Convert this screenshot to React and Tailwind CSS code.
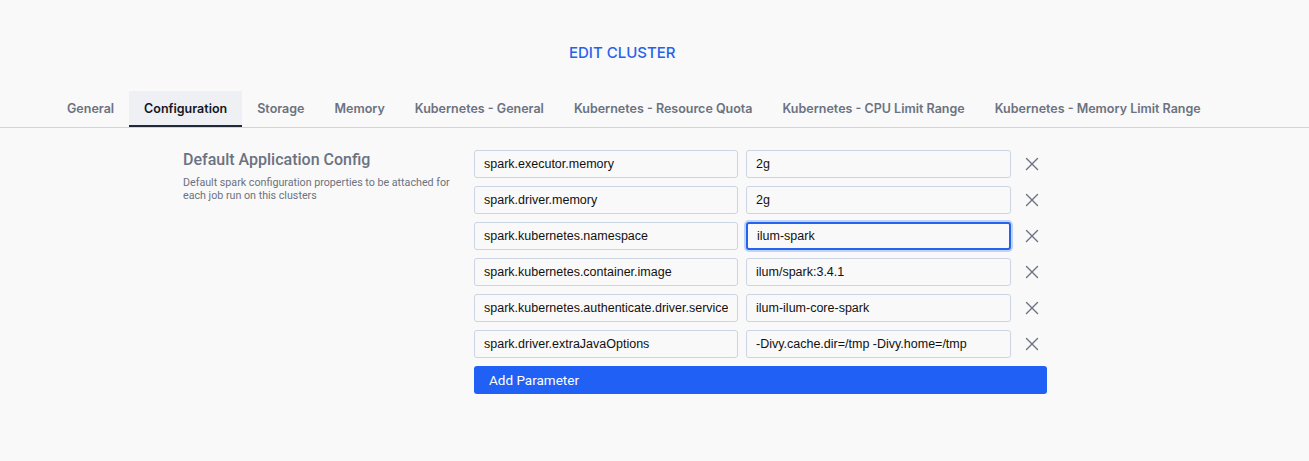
import React from "react";

const tabs = [
  "General",
  "Configuration",
  "Storage",
  "Memory",
  "Kubernetes - General",
  "Kubernetes - Resource Quota",
  "Kubernetes - CPU Limit Range",
  "Kubernetes - Memory Limit Range",
];

const params = [
  ["spark.executor.memory", "2g"],
  ["spark.driver.memory", "2g"],
  ["spark.kubernetes.namespace", "ilum-spark"],
  ["spark.kubernetes.container.image", "ilum/spark:3.4.1"],
  ["spark.kubernetes.authenticate.driver.serviceAccountName", "ilum-ilum-core-spark"],
  ["spark.driver.extraJavaOptions", "-Divy.cache.dir=/tmp -Divy.home=/tmp"],
];

function CloseIcon() {
  return (
    <svg width="16" height="16" viewBox="0 0 16 16" fill="none" stroke="#6b7280" strokeWidth="1.4" strokeLinecap="round">
      <path d="M2.5 2.5 L13.5 13.5 M13.5 2.5 L2.5 13.5" />
    </svg>
  );
}

export default function App() {
  return (
    <div className="w-full min-h-[461px] bg-[#f9f9f9] font-['Inter',sans-serif]">
      <div className="pt-[43px] pl-[569px] h-[91px]">
        <h1 className="text-[15px] leading-[20px] font-medium text-[#2563eb]">EDIT CLUSTER</h1>
      </div>

      <div className="flex pl-[52px] border-b border-[#d4d4d8]">
        {tabs.map((t, i) => (
          <div
            key={t}
            className={
              i === 1
                ? "px-[15px] h-[36px] pt-[2px] flex items-center text-[12.5px] font-semibold text-[#111827] bg-[#eef0f3] border-b-2 border-[#1f2937]"
                : "px-[15px] h-[36px] pt-[2px] flex items-center text-[12.5px] font-semibold text-[#6b7280] border-b-2 border-transparent"
            }
          >
            {t}
          </div>
        ))}
      </div>

      <div className="flex pl-[183px] pt-[22px]">
        <div className="w-[291px] pr-4 font-['Roboto',sans-serif]">
          <h2 className="text-[16px] leading-[20px] font-medium text-[#6b7280]">Default Application Config</h2>
          <p className="mt-[6px] text-[10.7px] leading-[13px] text-[#6b7280]">
            Default spark configuration properties to be attached for each job run on this clusters
          </p>
        </div>

        <div className="flex flex-col gap-[8px] w-[573px]">
          {params.map(([k, v], i) => (
            <div key={k} className="flex items-center">
              <input
                readOnly
                value={k}
                className="w-[264px] h-[28px] px-[9px] rounded-[3px] border border-[#cbd5e1] bg-[#f9f9f9] text-[12.5px] text-[#111] font-['Liberation_Sans',Arial,sans-serif] outline-none"
              />
              <input
                readOnly
                value={v}
                className={
                  i === 2
                    ? "ml-[8px] w-[265px] h-[28px] px-[9px] rounded-[3px] border-2 border-[#2563eb] ring-2 ring-[#bfd3fe] bg-[#f9f9f9] text-[12.5px] text-[#111] font-['Liberation_Sans',Arial,sans-serif] outline-none"
                    : "ml-[8px] w-[265px] h-[28px] px-[9px] rounded-[3px] border border-[#cbd5e1] bg-[#f9f9f9] text-[12.5px] text-[#111] font-['Liberation_Sans',Arial,sans-serif] outline-none"
                }
              />
              <button className="ml-[13px] w-[16px] h-[16px] flex items-center justify-center">
                <CloseIcon />
              </button>
            </div>
          ))}
          <button className="h-[28px] rounded-[3px] bg-[#2160f5] text-white text-[13.5px] text-left pl-[15px] font-['Roboto',sans-serif]">
            Add Parameter
          </button>
        </div>
      </div>
    </div>
  );
}
